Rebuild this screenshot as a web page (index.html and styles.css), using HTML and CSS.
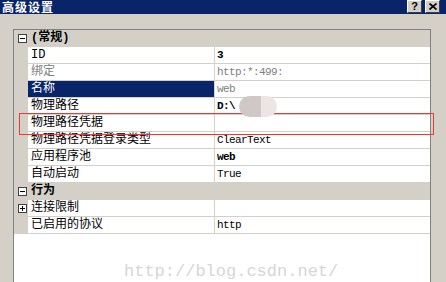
FILE: index.html
```html
<!DOCTYPE html>
<html lang="zh-CN">

<head>
    <meta charset="UTF-8">
    <meta name="viewport" content="width=device-width, initial-scale=1.0">
    <title>高级设置</title>
    <link rel="stylesheet" href="styles.css">
</head>

<body>
    <div class="window">
        <div class="titlebar">
            <span class="title">高级设置</span>
            <div class="buttons">
                <span class="tbtn">?</span>
                <span class="tbtn">
                    <svg width="8" height="7" viewBox="0 0 8 7">
                        <path d="M0.5 0.5 L7.5 6.5 M7.5 0.5 L0.5 6.5" stroke="#000" stroke-width="1.6" fill="none" />
                    </svg>
                </span>
            </div>
        </div>

        <div class="content">
            <div class="grid">
                <div class="row category">
                    <span class="margin"><i class="toggle"></i></span>
                    <span class="name">(常规)</span>
                </div>
                <div class="row">
                    <span class="margin"></span>
                    <span class="name">ID</span>
                    <span class="value bold">3</span>
                </div>
                <div class="row">
                    <span class="margin"></span>
                    <span class="name muted">绑定</span>
                    <span class="value muted">http:*:499:</span>
                </div>
                <div class="row">
                    <span class="margin"></span>
                    <span class="name selected">名称</span>
                    <span class="value muted">web</span>
                </div>
                <div class="row">
                    <span class="margin"></span>
                    <span class="name">物理路径</span>
                    <span class="value bold">D:\</span>
                </div>
                <div class="row">
                    <span class="margin"></span>
                    <span class="name">物理路径凭据</span>
                    <span class="value"></span>
                </div>
                <div class="row">
                    <span class="margin"></span>
                    <span class="name">物理路径凭据登录类型</span>
                    <span class="value">ClearText</span>
                </div>
                <div class="row">
                    <span class="margin"></span>
                    <span class="name">应用程序池</span>
                    <span class="value bold">web</span>
                </div>
                <div class="row">
                    <span class="margin"></span>
                    <span class="name">自动启动</span>
                    <span class="value">True</span>
                </div>
                <div class="row category">
                    <span class="margin"><i class="toggle"></i></span>
                    <span class="name">行为</span>
                </div>
                <div class="row">
                    <span class="margin"><i class="toggle plus"></i></span>
                    <span class="name">连接限制</span>
                    <span class="value"></span>
                </div>
                <div class="row">
                    <span class="margin"></span>
                    <span class="name">已启用的协议</span>
                    <span class="value">http</span>
                </div>
            </div>
        </div>

        <!-- annotation and blur laid over the screenshot -->
        <div class="highlight"></div>
        <div class="blur"></div>
        <div class="watermark">http://blog.csdn.net/</div>
    </div>
</body>

</html>
```

FILE: styles.css
```css
* {
    margin: 0;
    padding: 0;
    box-sizing: border-box;
}

body {
    width: 446px;
    height: 282px;
    overflow: hidden;
    background: #d4d0c8;
    font-family: "Liberation Mono", "Noto Sans CJK SC", monospace;
    font-size: 12px;
}

.window {
    position: relative;
    height: 282px;
}

.titlebar {
    display: flex;
    align-items: center;
    justify-content: space-between;
    height: 14px;
    padding: 0 6px 0 2px;
    background: #0a246a;
}

.title {
    color: #fff;
    font-family: "Noto Sans CJK SC", sans-serif;
    font-weight: bold;
    font-size: 12px;
    line-height: 14px;
    letter-spacing: 1px;
}

.buttons {
    display: flex;
    gap: 3px;
    align-self: flex-start;
}

.tbtn {
    display: flex;
    align-items: center;
    justify-content: center;
    width: 15px;
    height: 13px;
    background: #d4d0c8;
    border-top: 1px solid #fff;
    border-left: 1px solid #fff;
    border-right: 1px solid #404040;
    border-bottom: 1px solid #404040;
    font-family: "Liberation Sans", sans-serif;
    font-weight: bold;
    font-size: 11px;
    line-height: 11px;
}

.content {
    height: 268px;
    padding: 15px 15px 0 13px;
}

.grid {
    height: 100%;
    background: #fff;
    border: 1px solid #808080;
    border-bottom: none;
}

.row {
    display: grid;
    grid-template-columns: 14px 187px 1fr;
    height: 17px;
    line-height: 16px;
}

.margin {
    display: flex;
    align-items: center;
    justify-content: center;
    background: #d4d0c8;
}

.name {
    padding-left: 3px;
    border-right: 1px solid #d4d0c8;
    border-bottom: 1px solid #d4d0c8;
    white-space: nowrap;
}

.value {
    padding-left: 2px;
    border-bottom: 1px solid #d4d0c8;
    font-size: 11px;
    letter-spacing: -0.6px;
}

.category {
    background: #d4d0c8;
}

.category .name {
    grid-column: 2 / 4;
    border: none;
    font-weight: bold;
}

.muted {
    color: #808080;
}

.bold {
    font-weight: bold;
}

.selected {
    background: #0a246a;
    color: #fff;
}

.toggle {
    position: relative;
    width: 9px;
    height: 9px;
    margin-left: 2px;
    border: 1px solid #404040;
    background: #fff;
}

.toggle::before {
    content: "";
    position: absolute;
    left: 1px;
    top: 3px;
    width: 5px;
    height: 1px;
    background: #000;
}

.toggle.plus::after {
    content: "";
    position: absolute;
    left: 3px;
    top: 1px;
    width: 1px;
    height: 5px;
    background: #000;
}

.highlight {
    position: absolute;
    left: 19px;
    top: 113px;
    width: 415px;
    height: 22px;
    border: 1px solid #ee3636;
}

.blur {
    position: absolute;
    left: 239px;
    top: 96px;
    width: 38px;
    height: 21px;
    border-radius: 11px;
    background: linear-gradient(to right, #d0c7c7 58%, #ede5e5 58%);
}

.watermark {
    position: absolute;
    left: 124px;
    top: 263px;
    font-family: "Liberation Mono", monospace;
    font-size: 17px;
    line-height: 18px;
    color: #d6d6d6;
}
```
